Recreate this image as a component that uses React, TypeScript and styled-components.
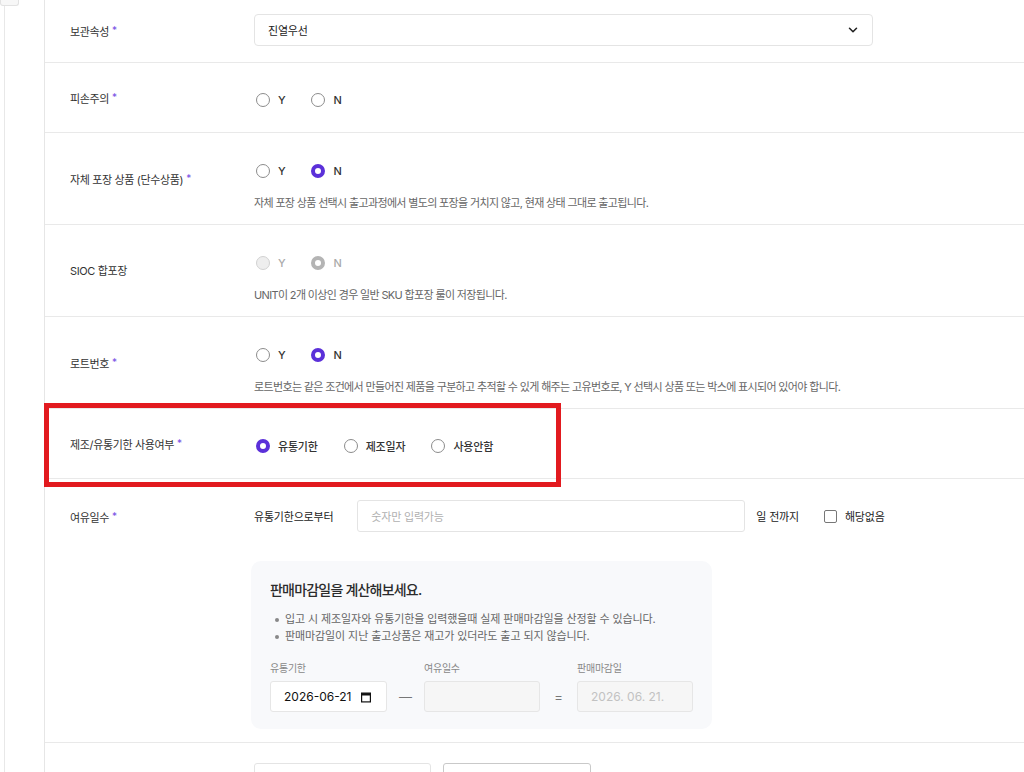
import React from 'react';
import styled, { createGlobalStyle } from 'styled-components';
import { ChevronDown } from 'lucide-react';

const GlobalStyle = createGlobalStyle`
  html, body {
    margin: 0;
    padding: 0;
    background: #fff;
  }
  body {
    font-family: "Inter", "Noto Sans CJK KR", "Noto Sans", sans-serif;
    color: #333;
    overflow: hidden;
  }
  * {
    box-sizing: border-box;
  }
`;

const Page = styled.div`
  display: flex;
  width: 1024px;
  min-height: 772px;
`;

const Gutter = styled.aside`
  width: 45px;
  flex-shrink: 0;
  display: flex;
  flex-direction: column;
  border-right: 1px solid #e6e6e6;
`;

const Tab = styled.div`
  width: 19px;
  height: 6px;
  border: 1px solid #e2e2e2;
  border-top: none;
  border-radius: 0 0 3px 3px;
  background: #f7f7f7;
`;

const Rail = styled.div`
  flex: 1;
  margin-left: 4px;
  border-left: 1px solid #e8e8e8;
`;

const Form = styled.main`
  flex: 1;
  min-width: 0;
`;

const Row = styled.section`
  position: relative;
  display: grid;
  grid-template-columns: 209px 1fr;
  border-bottom: 1px solid #e9e9e9;
`;

const Label = styled.div<{ $top?: string }>`
  align-self: ${p => (p.$top ? 'start' : 'center')};
  padding: ${p => (p.$top ? `${p.$top} 0 0 25px` : '0 0 0 25px')};
  line-height: 32px;
  font-size: 11px;
  letter-spacing: -0.35px;
  color: #333;
`;

const Star = styled.span`
  margin-left: 3px;
  font-size: 10px;
  color: #7650e4;
  vertical-align: 2px;
`;

const Value = styled.div<{ $pad: string }>`
  display: flex;
  flex-direction: column;
  align-items: flex-start;
  min-width: 0;
  padding: ${p => p.$pad};
`;

const SelectBox = styled.div`
  width: 619px;
  height: 32px;
  display: flex;
  align-items: center;
  justify-content: space-between;
  padding: 0 12px 0 13px;
  border: 1px solid #e4e4e4;
  border-radius: 4px;
  font-size: 11px;
  letter-spacing: -0.2px;
  color: #222;
`;

const RadioGroup = styled.div`
  display: flex;
  align-items: center;
  gap: 26px;
  height: 24px;
  padding-left: 2px;
`;

const RadioItem = styled.label<{ $disabled?: boolean }>`
  display: flex;
  align-items: center;
  gap: 8px;
  font-size: 11px;
  font-weight: 500;
  letter-spacing: -0.2px;
  color: ${p => (p.$disabled ? '#aaa' : '#333')};
`;

const Dot = styled.span<{ $checked?: boolean; $disabled?: boolean }>`
  width: 14px;
  height: 14px;
  border-radius: 50%;
  flex-shrink: 0;
  background: ${p => (p.$disabled && !p.$checked ? '#eeeeee' : '#fff')};
  border: ${p =>
    p.$checked
      ? `4px solid ${p.$disabled ? '#b4b4b4' : '#5b30d9'}`
      : `1px solid ${p.$disabled ? '#d2d2d2' : '#8c8c8c'}`};
`;

const Helper = styled.p`
  margin: 10px 0 0;
  line-height: 20px;
  font-size: 11px;
  letter-spacing: -0.65px;
  color: #666;
`;

const Highlight = styled.div`
  position: absolute;
  left: -1px;
  top: -6px;
  width: 517px;
  height: 84px;
  border: 5px solid #e21a1f;
  pointer-events: none;
  z-index: 2;
`;

const InputLine = styled.div`
  display: flex;
  align-items: center;
  height: 32px;
  font-size: 11px;
  letter-spacing: -0.2px;
  color: #222;
`;

const TextInput = styled.div`
  width: 388px;
  height: 32px;
  margin: 0 11px 0 24px;
  display: flex;
  align-items: center;
  padding-left: 13px;
  border: 1px solid #e4e4e4;
  border-radius: 3px;
  color: #b0b0b0;
`;

const CheckItem = styled.label`
  display: flex;
  align-items: center;
  gap: 8px;
  margin-left: 25px;
`;

const Box = styled.span`
  width: 13px;
  height: 13px;
  border: 1px solid #777;
  border-radius: 2px;
  background: #fff;
`;

const CalcCard = styled.div`
  margin: 29px 0 0 -3px;
  padding: 19px 19px 17px;
  border-radius: 10px;
  background: #f8f9fb;
`;

const CalcTitle = styled.h3`
  margin: 0;
  line-height: 20px;
  font-size: 14px;
  font-weight: 500;
  letter-spacing: -0.8px;
  color: #2b2b2b;
`;

const Notes = styled.ul`
  margin: 11px 0 0;
  padding: 0;
  list-style: none;
  li {
    position: relative;
    padding-left: 15px;
    line-height: 17px;
    font-size: 11px;
    letter-spacing: -0.1px;
    color: #666;
  }
  li::before {
    content: '';
    position: absolute;
    left: 5px;
    top: 7px;
    width: 4px;
    height: 4px;
    border-radius: 50%;
    background: #888;
  }
`;

const CalcGrid = styled.div`
  margin-top: 14px;
  display: grid;
  grid-template-columns: 117px 37px 116px 37px 116px;
  grid-template-rows: 16px 31px;
  row-gap: 6px;
  align-items: center;
`;

const FieldLabel = styled.span<{ $col: number }>`
  grid-column: ${p => p.$col};
  grid-row: 1;
  font-size: 10px;
  letter-spacing: -0.25px;
  color: #888;
`;

const Field = styled.div<{ $tone: 'white' | 'muted' }>`
  grid-row: 2;
  height: 31px;
  display: flex;
  align-items: center;
  justify-content: space-between;
  padding: 0 14px 0 13px;
  border: 1px solid #e6e6e6;
  border-radius: 3px;
  background: ${p => (p.$tone === 'white' ? '#fff' : '#f6f6f6')};
  font-size: 12px;
  color: ${p => (p.$tone === 'white' ? '#111' : '#c2c2c2')};
`;

const Operator = styled.span`
  grid-row: 2;
  text-align: center;
  font-size: 13px;
  color: #777;
`;

const SmallInput = styled.div<{ $w: number; $dark?: boolean }>`
  width: ${p => p.$w}px;
  height: 32px;
  border: 1px solid ${p => (p.$dark ? '#c9c9c9' : '#e4e4e4')};
  border-radius: 3px;
`;

const InputPair = styled.div`
  display: flex;
  gap: 12px;
`;

const CalendarIcon = () => (
  <svg width="12" height="12" viewBox="0 0 12 12" fill="none">
    <rect x="1.6" y="2.1" width="8.8" height="8.8" stroke="#111" strokeWidth="1.2" />
    <rect x="1.6" y="2.1" width="8.8" height="2.4" fill="#111" />
  </svg>
);

type Opt = { text: string; checked?: boolean };

const Radios = ({ options, disabled }: { options: Opt[]; disabled?: boolean }) => (
  <RadioGroup>
    {options.map(o => (
      <RadioItem key={o.text} $disabled={disabled}>
        <Dot $checked={o.checked} $disabled={disabled} />
        {o.text}
      </RadioItem>
    ))}
  </RadioGroup>
);

const yn = (checked?: 'Y' | 'N'): Opt[] => [
  { text: 'Y', checked: checked === 'Y' },
  { text: 'N', checked: checked === 'N' },
];

// rows with a helper line sit a touch lower than plain radio rows
const HELP_PAD = '26px 0 11px';
const PLAIN_PAD = '25px 0 20px';

const App = () => {
  return (
    <Page>
      <GlobalStyle />
      <Gutter>
        <Tab />
        <Rail />
      </Gutter>
      <Form>
        <Row>
          <Label>
            보관속성<Star>*</Star>
          </Label>
          <Value $pad="14px 0 16px">
            <SelectBox>
              진열우선
              <ChevronDown size={14} strokeWidth={2.6} color="#222" />
            </SelectBox>
          </Value>
        </Row>

        <Row>
          <Label>
            피손주의<Star>*</Star>
          </Label>
          <Value $pad={PLAIN_PAD}>
            <Radios options={yn()} />
          </Value>
        </Row>

        <Row>
          <Label>
            자체 포장 상품 (단수상품)<Star>*</Star>
          </Label>
          <Value $pad={HELP_PAD}>
            <Radios options={yn('N')} />
            <Helper>자체 포장 상품 선택시 출고과정에서 별도의 포장을 거치지 않고, 현재 상태 그대로 출고됩니다.</Helper>
          </Value>
        </Row>

        <Row>
          <Label>SIOC 합포장</Label>
          <Value $pad={HELP_PAD}>
            <Radios options={yn('N')} disabled />
            <Helper>UNIT이 2개 이상인 경우 일반 SKU 합포장 룰이 저장됩니다.</Helper>
          </Value>
        </Row>

        <Row>
          <Label>
            로트번호<Star>*</Star>
          </Label>
          <Value $pad={HELP_PAD}>
            <Radios options={yn('N')} />
            <Helper>
              로트번호는 같은 조건에서 만들어진 제품을 구분하고 추적할 수 있게 해주는 고유번호로, Y 선택시 상품 또는 박스에 표시되어 있어야 합니다.
            </Helper>
          </Value>
        </Row>

        <Row>
          <Highlight />
          <Label>
            제조/유통기한 사용여부<Star>*</Star>
          </Label>
          <Value $pad={PLAIN_PAD}>
            <Radios
              options={[
                { text: '유통기한', checked: true },
                { text: '제조일자' },
                { text: '사용안함' },
              ]}
            />
          </Value>
        </Row>

        <Row>
          <Label $top="21px">
            여유일수<Star>*</Star>
          </Label>
          <Value $pad="21px 0 13px">
            <InputLine>
              유통기한으로부터
              <TextInput>숫자만 입력가능</TextInput>
              일 전까지
              <CheckItem>
                <Box />
                해당없음
              </CheckItem>
            </InputLine>
            <CalcCard>
              <CalcTitle>판매마감일을 계산해보세요.</CalcTitle>
              <Notes>
                <li>입고 시 제조일자와 유통기한을 입력했을때 실제 판매마감일을 산정할 수 있습니다.</li>
                <li>판매마감일이 지난 출고상품은 재고가 있더라도 출고 되지 않습니다.</li>
              </Notes>
              <CalcGrid>
                <FieldLabel $col={1}>유통기한</FieldLabel>
                <FieldLabel $col={3}>여유일수</FieldLabel>
                <FieldLabel $col={5}>판매마감일</FieldLabel>
                <Field $tone="white">
                  2026-06-21
                  <CalendarIcon />
                </Field>
                <Operator>—</Operator>
                <Field $tone="muted" />
                <Operator>=</Operator>
                <Field $tone="muted">2026. 06. 21.</Field>
              </CalcGrid>
            </CalcCard>
          </Value>
        </Row>

        <Row>
          <div />
          <Value $pad="20px 0 20px">
            <InputPair>
              <SmallInput $w={177} />
              <SmallInput $w={148} $dark />
            </InputPair>
          </Value>
        </Row>
      </Form>
    </Page>
  );
};

export default App;
